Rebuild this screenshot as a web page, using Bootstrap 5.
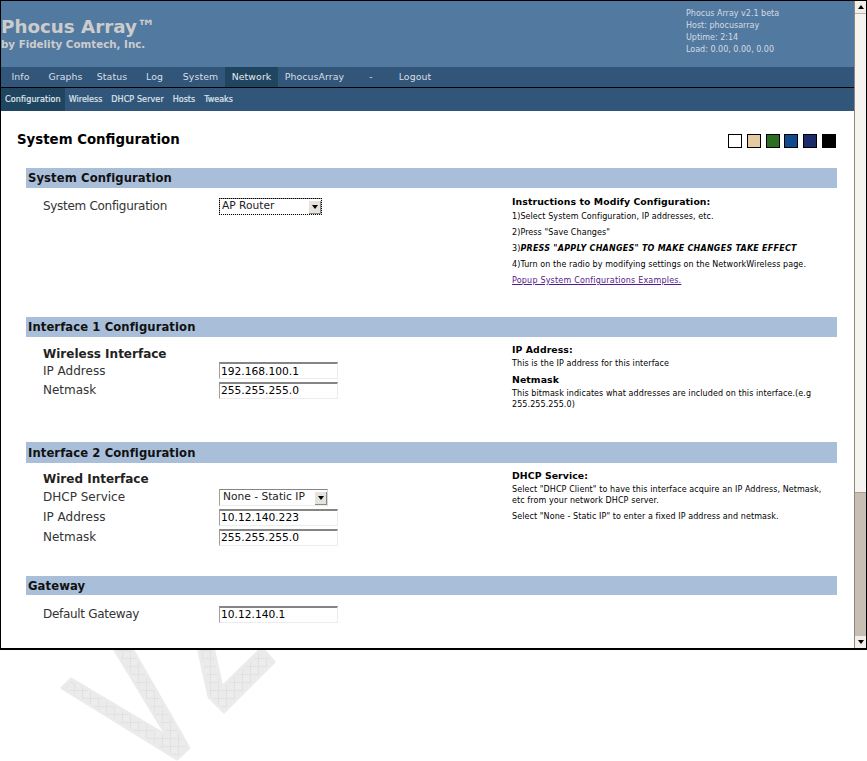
<!DOCTYPE html>
<html lang="en">
  <head>
    <meta charset="UTF-8" />
    <meta name="viewport" content="width=device-width, initial-scale=1.0" />
    <title>Phocus Array - Network Configuration</title>
    <link href="https://cdn.jsdelivr.net/npm/bootstrap@5.3.2/dist/css/bootstrap.min.css" rel="stylesheet" />
    <style>
      html, body { height: 761px; overflow: hidden; }
      body { font-family: "DejaVu Sans", sans-serif; background: #fff; color: #000; margin: 0; }
      a { color: inherit; text-decoration: none; }

      .shot-frame { height: 650px; border: solid #000; border-width: 1px 1px 2px 1px; }
      .page-area { width: 853px; }

      /* header */
      .top-head { height: 66px; background: #527aa1; color: #ccc; }
      .brand-name { font-size: 18.3px; font-weight: 700; line-height: 22px; padding-top: 15px; }
      .brand-by { font-size: 10.3px; font-weight: 700; line-height: 13px; }
      .sys-info { font-size: 8px; line-height: 12px; padding: 7px 0 0 0; width: 168px; color: #d5dbe3; }

      /* menus */
      .main-menu { height: 20px; background: #31567a; }
      .main-menu a { display: block; height: 20px; line-height: 20px; font-size: 9.33px; letter-spacing: 0.1px; text-align: center; color: #d8dfe6; }
      .main-menu a.active-item, .sub-menu a.active-item { background: #1f4560; color: #e6ebf0; }
      .main-menu li:nth-child(1) a { width: 39px; }
      .main-menu li:nth-child(2) a { width: 51px; }
      .main-menu li:nth-child(3) a { width: 42px; }
      .main-menu li:nth-child(4) a { width: 43px; }
      .main-menu li:nth-child(5) a { width: 49px; }
      .main-menu li:nth-child(6) a { width: 53px; }
      .main-menu li:nth-child(7) a { width: 73px; }
      .main-menu li:nth-child(8) a { width: 40px; }
      .main-menu li:nth-child(9) a { width: 48px; }
      .sub-menu { height: 24px; background: #31567a; border-top: 1px solid #000; }
      .sub-menu a { display: block; height: 23px; line-height: 24px; font-size: 8px; padding: 0 5px 0 4px; color: #dfe5ea; -webkit-text-stroke: 0.2px #dfe5ea; }
      .sub-menu li:first-child a { letter-spacing: 0.12px; padding-right: 4px; }
      .sub-menu li:nth-child(3) a { letter-spacing: 0.1px; }

      /* page title and colour chooser */
      .page-title { font-size: 13.33px; font-weight: 700; line-height: 16px; margin: 0; padding: 21px 0 0 16px; height: 57px; }
      .swatches { gap: 4.8px; padding: 23px 18px 0 0; }
      .swatch { width: 14px; height: 14px; border: 1px solid #000; }
      .sw-white { background: #fff; }
      .sw-tan { background: #e5cb9f; }
      .sw-green { background: #2c6e20; }
      .sw-blue { background: #104a8e; }
      .sw-navy { background: #1c2b6b; }
      .sw-black { background: #000; }

      /* config sections */
      .cfg-section { margin-left: 25px; width: 811px; }
      .cfg-head { background: #a9bfd9; height: 20px; font-size: 11.6px; font-weight: 700; letter-spacing: 0.1px; line-height: 21px; padding-left: 2px; margin: 0; color: #111; }
      .cfg-cols { display: flex; padding-top: 8px; }
      .sec-one { height: 149px; }
      .sec-two { height: 125px; }
      .sec-three { height: 134px; }
      .sec-three .cfg-head { height: 21px; line-height: 22px; }
      .sec-three .cfg-cols { padding-top: 7px; }
      .sec-gate .cfg-head { height: 19px; line-height: 21px; }
      .sec-gate .cfg-cols { padding-top: 9px; }
      .cfg-left { width: 486px; padding-left: 17px; }
      .cfg-right { width: 325px; font-size: 8px; letter-spacing: 0.085px; line-height: 11px; padding-right: 4px; }
      .cfg-right p { margin: 0 0 5px 0; }
      .cfg-right p b { letter-spacing: 0.24px; }
      .cfg-right .note-head { font-size: 9.33px; font-weight: 700; line-height: 12px; margin: 0 0 2px 0; }
      .sec-one .cfg-right .note-head { margin-bottom: 3px; }
      .sec-two .cfg-right { margin-top: -1px; }
      .field-line { height: 20px; display: flex; align-items: center; font-size: 12px; color: #333; }
      .sec-two .field-line { height: 19.5px; }
      .sec-two .iface-name { line-height: 14px; }
      .field-line label { width: 176px; margin: 0; }
      .tight-label { letter-spacing: -0.3px; }
      .iface-name { font-size: 12px; font-weight: 700; line-height: 15px; color: #222; }
      .iface-body { padding-top: 2px; }

      .plain-input { width: 119px; height: 17px; padding: 0 0 0 1px; border: solid #ececec; border-width: 0 1px 1px 0; border-top: 2px solid #858585; border-left: 1px solid #a0a0a0; border-radius: 0; font-size: 10.67px; line-height: 15px; font-family: "DejaVu Sans", sans-serif; color: #000; box-shadow: none; }
      .select-wrap { position: relative; display: inline-block; line-height: 0; }
      .plain-select { height: 17px; padding: 0 0 0 3px; border: 1px solid #a0a0a0; border-top-color: #858585; border-right-color: #d8d8d8; border-bottom-color: #ececec; border-radius: 0; font-size: 10.67px; line-height: 14px; color: #222; background-image: none; font-family: "DejaVu Sans", sans-serif; box-shadow: none; }
      .select-ap { width: 103px; padding-left: 2px; outline: 1px dotted #000; outline-offset: -1px; }
      .select-dhcp { width: 109px; }
      .select-arrow { position: absolute; top: 2px; right: 2px; width: 12px; height: 13px; background: #e6e2dc; border: solid #fff; border-width: 1px 0 0 1px; box-shadow: 1px 1px 0 #8a8a8a; display: flex; align-items: center; justify-content: center; }
      .select-arrow i { display: block; width: 0; height: 0; border-left: 3.5px solid transparent; border-right: 3.5px solid transparent; border-top: 4px solid #000; }

      .note-link { color: #551a8b; text-decoration: underline; letter-spacing: 0.2px; }

      /* scrollbar */
      .fake-scroll { width: 12px; border-left: 1px solid #8f867c; background: #c8bfb4; }
      .scroll-btn { height: 12px; background: #f2efea; display: flex; align-items: center; justify-content: center; }
      .arrow-up { width: 0; height: 0; border-left: 3.5px solid transparent; border-right: 3.5px solid transparent; border-bottom: 4px solid #000; }
      .arrow-down { width: 0; height: 0; border-left: 3.5px solid transparent; border-right: 3.5px solid transparent; border-top: 4px solid #000; }
      .scroll-thumb { height: 480px; background: #f6f4f1; border-top: 1px solid #bdb5ab; border-bottom: 1px solid #a89f94; display: flex; align-items: center; justify-content: center; }
      .thumb-grip { width: 6px; height: 13px; background-image: radial-gradient(#b3aa9e 30%, transparent 35%); background-size: 2px 2px; }
      .scroll-track { height: 143px; }

      .mark-strip { display: block; }
    </style>
  </head>
  <body>
    <div class="shot-frame d-flex">
      <div class="page-area">
        <div class="top-head d-flex justify-content-between">
          <div>
            <div class="brand-name">Phocus Array™</div>
            <div class="brand-by">by Fidelity Comtech, Inc.</div>
          </div>
          <div class="sys-info">
            <div>Phocus Array v2.1 beta</div>
            <div>Host: phocusarray</div>
            <div>Uptime: 2:14</div>
            <div>Load: 0.00, 0.00, 0.00</div>
          </div>
        </div>

        <ul class="nav main-menu">
          <li><a href="#">Info</a></li>
          <li><a href="#">Graphs</a></li>
          <li><a href="#">Status</a></li>
          <li><a href="#">Log</a></li>
          <li><a href="#">System</a></li>
          <li><a href="#" class="active-item">Network</a></li>
          <li><a href="#">PhocusArray</a></li>
          <li><a href="#">-</a></li>
          <li><a href="#">Logout</a></li>
        </ul>
        <ul class="nav sub-menu">
          <li><a href="#" class="active-item">Configuration</a></li>
          <li><a href="#">Wireless</a></li>
          <li><a href="#">DHCP Server</a></li>
          <li><a href="#">Hosts</a></li>
          <li><a href="#">Tweaks</a></li>
        </ul>

        <div class="d-flex justify-content-between">
          <h1 class="page-title">System Configuration</h1>
          <div class="swatches d-flex">
            <span class="swatch sw-white"></span>
            <span class="swatch sw-tan"></span>
            <span class="swatch sw-green"></span>
            <span class="swatch sw-blue"></span>
            <span class="swatch sw-navy"></span>
            <span class="swatch sw-black"></span>
          </div>
        </div>

        <section class="cfg-section sec-one">
          <h2 class="cfg-head">System Configuration</h2>
          <div class="cfg-cols">
            <div class="cfg-left">
              <div class="field-line">
                <label class="tight-label">System Configuration</label>
                <span class="select-wrap">
                  <select class="form-select plain-select select-ap"><option>AP Router</option></select>
                  <span class="select-arrow"><i></i></span>
                </span>
              </div>
            </div>
            <div class="cfg-right">
              <div class="note-head">Instructions to Modify Configuration:</div>
              <p>1)Select System Configuration, IP addresses, etc.</p>
              <p>2)Press "Save Changes"</p>
              <p>3)<b><i>PRESS "APPLY CHANGES" TO MAKE CHANGES TAKE EFFECT</i></b></p>
              <p>4)Turn on the radio by modifying settings on the NetworkWireless page.</p>
              <p><a href="#" class="note-link">Popup System Configurations Examples.</a></p>
            </div>
          </div>
        </section>

        <section class="cfg-section sec-two">
          <h2 class="cfg-head">Interface 1 Configuration</h2>
          <div class="cfg-cols">
            <div class="cfg-left iface-body">
              <div class="iface-name">Wireless Interface</div>
              <div class="field-line"><label>IP Address</label><input class="form-control plain-input" value="192.168.100.1" /></div>
              <div class="field-line"><label>Netmask</label><input class="form-control plain-input" value="255.255.255.0" /></div>
            </div>
            <div class="cfg-right">
              <div class="note-head">IP Address:</div>
              <p>This is the IP address for this interface</p>
              <div class="note-head">Netmask</div>
              <p>This bitmask indicates what addresses are included on this interface.(e.g 255.255.255.0)</p>
            </div>
          </div>
        </section>

        <section class="cfg-section sec-three">
          <h2 class="cfg-head">Interface 2 Configuration</h2>
          <div class="cfg-cols">
            <div class="cfg-left iface-body">
              <div class="iface-name">Wired Interface</div>
              <div class="field-line">
                <label>DHCP Service</label>
                <span class="select-wrap">
                  <select class="form-select plain-select select-dhcp"><option>None - Static IP</option></select>
                  <span class="select-arrow"><i></i></span>
                </span>
              </div>
              <div class="field-line"><label>IP Address</label><input class="form-control plain-input" value="10.12.140.223" /></div>
              <div class="field-line"><label>Netmask</label><input class="form-control plain-input" value="255.255.255.0" /></div>
            </div>
            <div class="cfg-right">
              <div class="note-head">DHCP Service:</div>
              <p>Select "DHCP Client" to have this interface acquire an IP Address, Netmask, etc from your network DHCP server.</p>
              <p>Select "None - Static IP" to enter a fixed IP address and netmask.</p>
            </div>
          </div>
        </section>

        <section class="cfg-section sec-gate">
          <h2 class="cfg-head">Gateway</h2>
          <div class="cfg-cols">
            <div class="cfg-left">
              <div class="field-line"><label class="tight-label">Default Gateway</label><input class="form-control plain-input" value="10.12.140.1" /></div>
            </div>
          </div>
        </section>
      </div>

      <div class="fake-scroll">
        <div class="scroll-btn"><span class="arrow-up"></span></div>
        <div class="scroll-thumb"><span class="thumb-grip"></span></div>
        <div class="scroll-track"></div>
        <div class="scroll-btn"><span class="arrow-down"></span></div>
      </div>
    </div>

    <svg class="mark-strip" width="867" height="111" viewBox="0 650 867 111">
      <defs>
        <pattern id="markGrid" x="2" y="2" width="16" height="16" patternUnits="userSpaceOnUse">
          <rect width="16" height="16" fill="#ebebeb" />
          <path d="M0 .5H16M0 8.5H16M.5 0V16M8.5 0V16" stroke="#e2e2e2" stroke-width="1" fill="none" />
          <rect x="4" y="4" width="1" height="1" fill="#fafafa" />
          <rect x="12" y="12" width="1" height="1" fill="#fafafa" />
        </pattern>
      </defs>
      <g fill="url(#markGrid)" stroke="#ebebeb" stroke-width="3" stroke-linejoin="round">
        <polygon points="71,679 167,736 113,647 131,647 189,748 177,759 62,688" />
        <polygon points="198,647 213,647 222,687 262,648 274,662 224,712 209,697" />
      </g>
    </svg>

    <script src="https://cdn.jsdelivr.net/npm/bootstrap@5.3.2/dist/js/bootstrap.bundle.min.js"></script>
  </body>
</html>
